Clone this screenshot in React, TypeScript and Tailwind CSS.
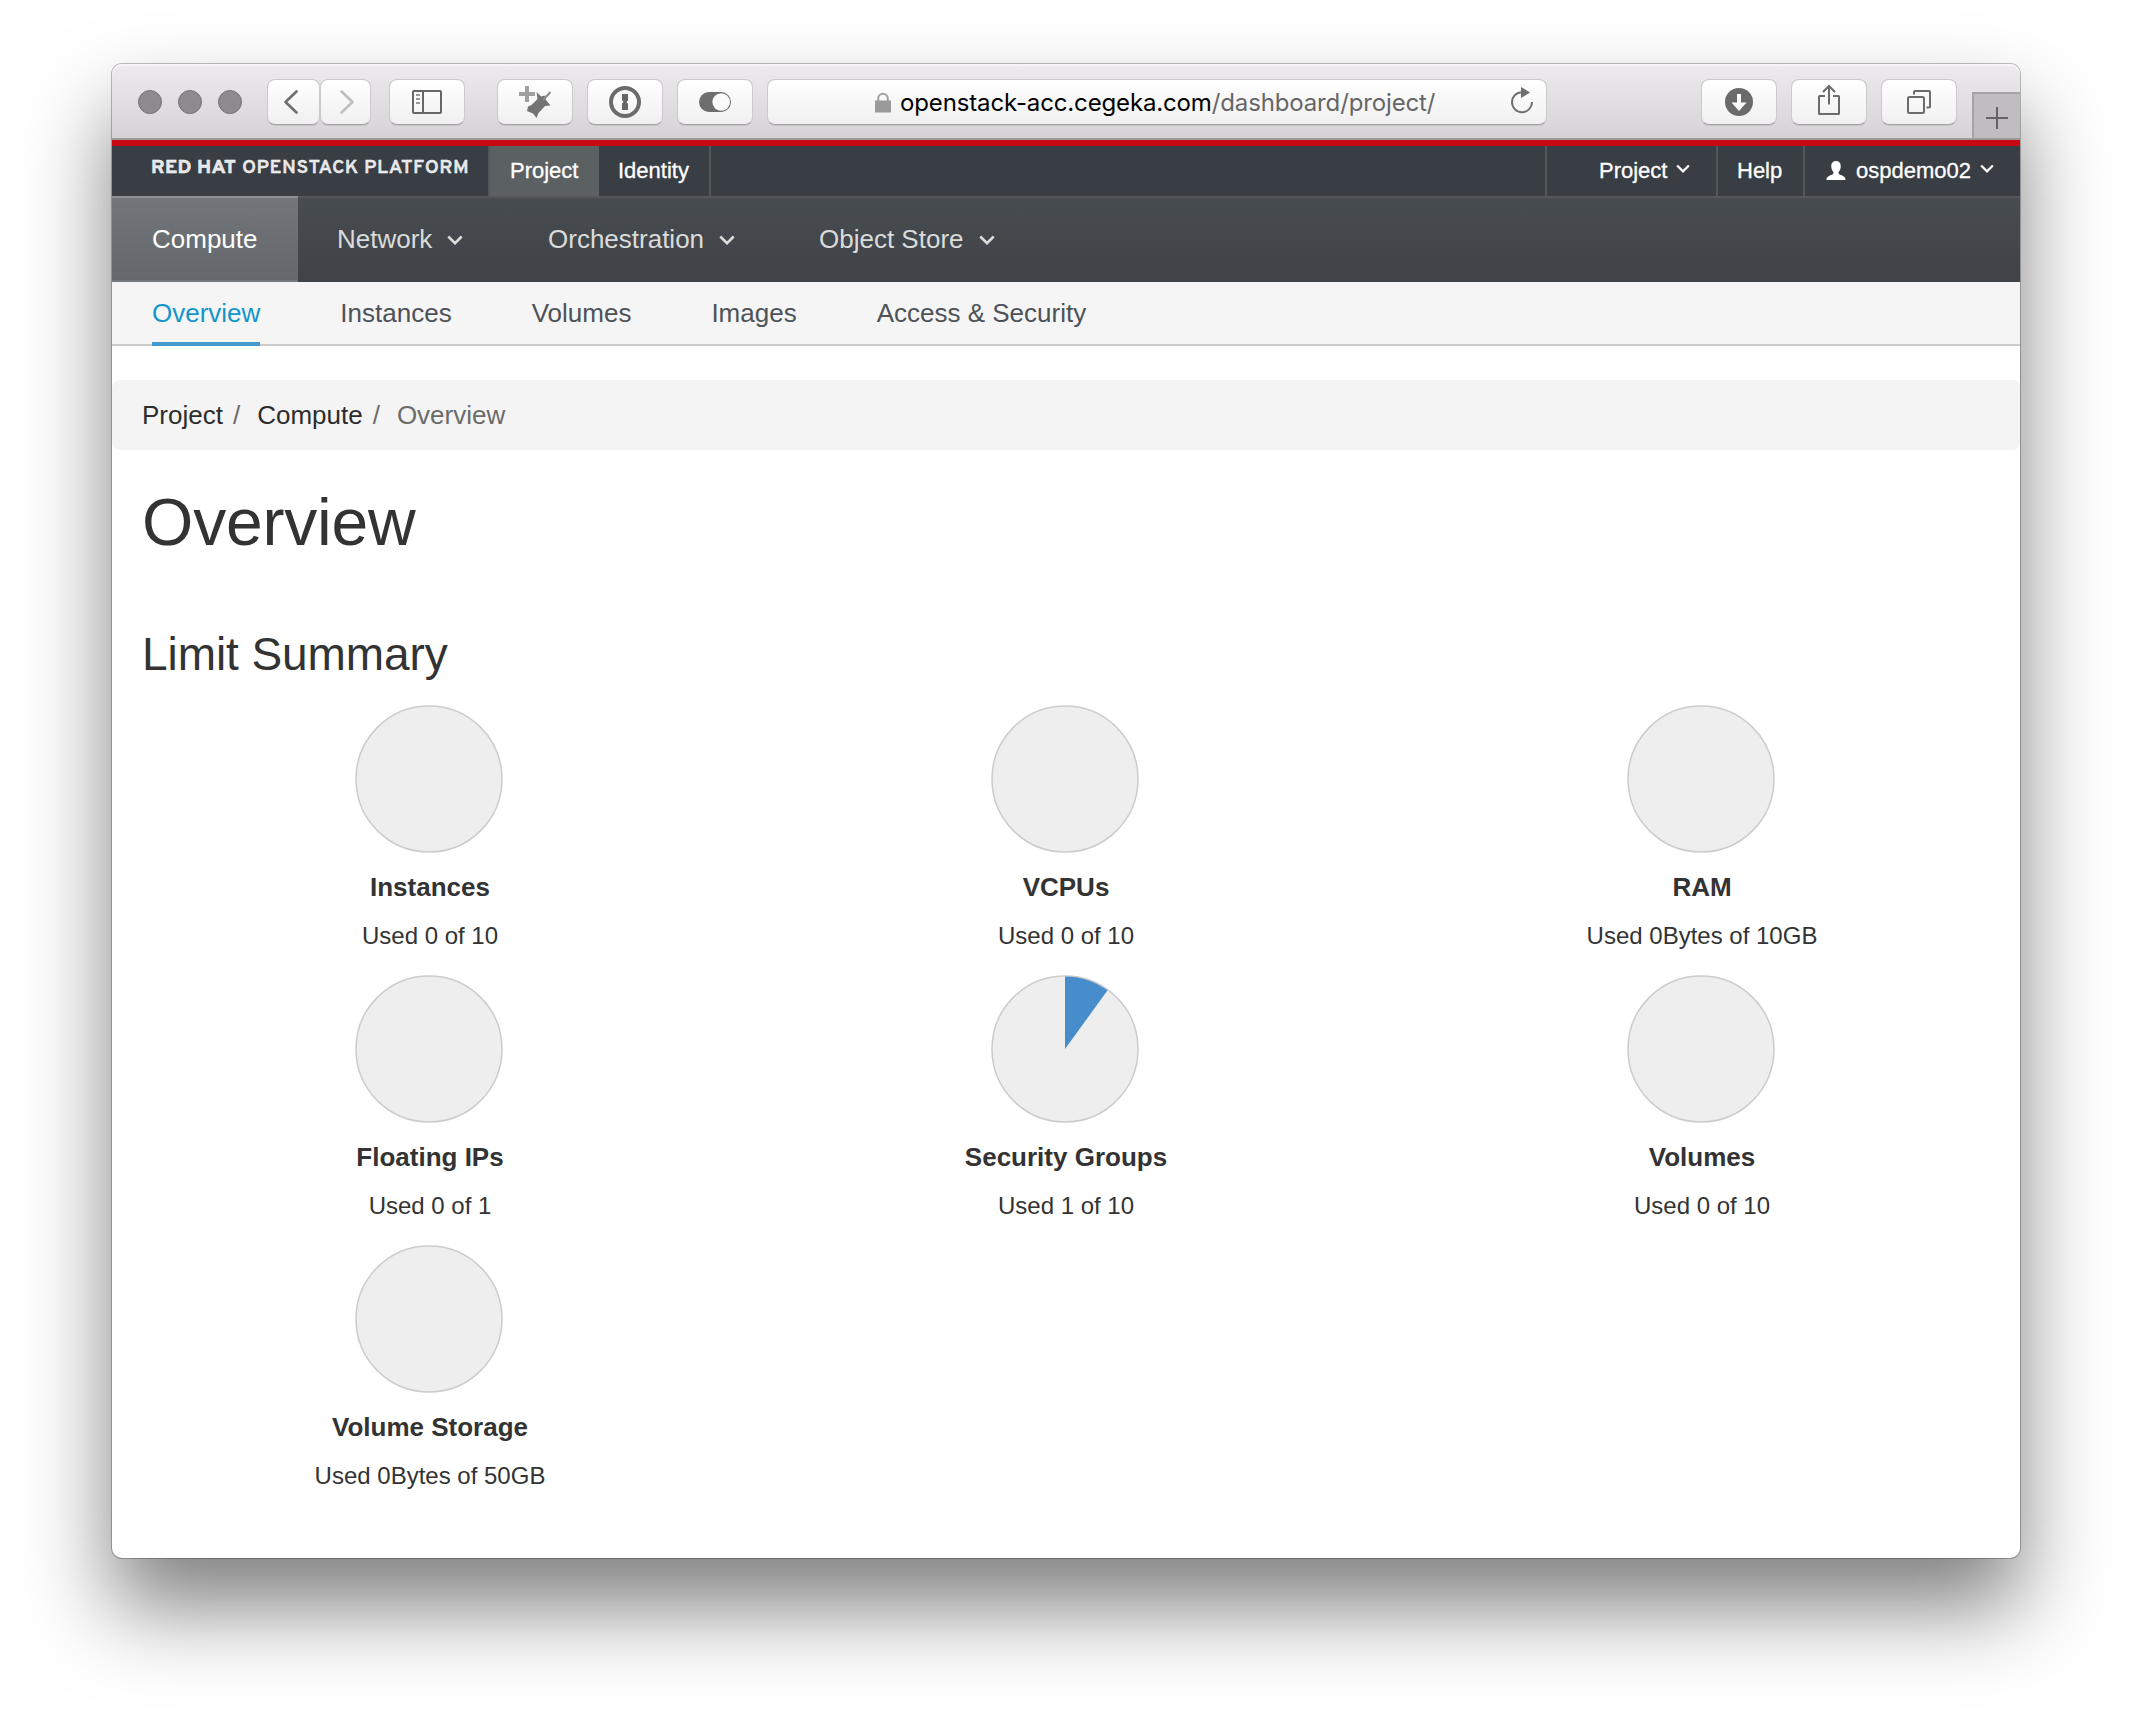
import React from "react";

type P = { className?: string };

const Chevron = ({ className = "" }: P) => (
  <svg viewBox="0 0 16 10" className={className} fill="none" stroke="currentColor" strokeWidth="2.6">
    <path d="M1.3 1.5 8 8.2l6.7-6.7" />
  </svg>
);

const Btn = ({ className = "", children }: P & { children?: React.ReactNode }) => (
  <div
    className={
      "flex h-[46px] shrink-0 items-center justify-center rounded-[8px] border border-[#cbc9cc] border-b-[#a3a1a4] bg-gradient-to-b from-white to-[#f1f0f1] text-[#6e6e6e] shadow-[0_1px_0_rgba(0,0,0,0.08)] " +
      className
    }
  >
    {children}
  </div>
);

const Toolbar = () => (
  <div className="flex h-[76px] rounded-t-[10px] border-b-2 border-[#9b999c] bg-gradient-to-b from-[#edebee] to-[#d5d3d6] shadow-[inset_0_2px_0_#f5f4f6]">
    <div className="flex flex-1 pt-[15px]">
      <div className="mt-[11px] ml-[26px] flex gap-4">
        {[0, 1, 2].map((i) => (
          <div key={i} className="size-6 rounded-full border border-[#747277] bg-[#8d8b90]" />
        ))}
      </div>
      <Btn className="ml-[25px] w-[53px]">
        <svg viewBox="0 0 16 24" className="mr-1.5 h-6 w-4" fill="none" stroke="#6e6e6e" strokeWidth="2.6" strokeLinecap="round" strokeLinejoin="round">
          <path d="M13.5 1.5 2.5 12l11 10.500" />
        </svg>
      </Btn>
      <Btn className="w-[51px]">
        <svg viewBox="0 0 16 24" className="ml-0.5 h-6 w-4" fill="none" stroke="#bfbfbf" strokeWidth="2.6" strokeLinecap="round" strokeLinejoin="round">
          <path d="M2.500 1.500 13.500 12l-11 10.500" />
        </svg>
      </Btn>
      <Btn className="ml-[18px] w-[76px]">
        <svg viewBox="0 0 30 24" className="h-6 w-[30px]" fill="none" stroke="#666" strokeWidth="2">
          <rect x="1" y="1" width="28" height="22" rx="1" />
          <path d="M11 1v22" />
          <path d="M4 5h4M4 9h4M4 13h4" stroke="#999" />
        </svg>
      </Btn>
      <Btn className="ml-8 w-[76px]">
        <svg viewBox="0 0 32 32" className="size-8">
          <path d="M8 0v16M0 8h16" stroke="#a0a0a0" strokeWidth="4" />
          <path d="M17.500 6 22 10.500l3.500-1 1.500 4.500 4.500 5.500-5.500.5-6.500 7-2 5-3.500-4.500L8 25l1-4.500 3.500-1.500 6-6z" fill="#737373" />
          <path d="M24 14 31.500 6" stroke="#8a8a8a" strokeWidth="2.200" />
        </svg>
      </Btn>
      <Btn className="ml-[14px] w-[76px]">
        <svg viewBox="0 0 32 32" className="size-8">
          <circle cx="16" cy="16" r="14" fill="none" stroke="#6b6b6b" strokeWidth="4" />
          <path d="M13 8h6v6.500l-1.500 1.500L19 18v6h-6v-6.500l1.500-1.500L13 14z" fill="#666" />
        </svg>
      </Btn>
      <Btn className="ml-[14px] w-[76px]">
        <svg viewBox="0 0 32 20" className="h-5 w-8">
          <rect x="0.600" y="0.600" width="30.800" height="18.800" rx="9.400" fill="#6e6e6e" stroke="#6e6e6e" strokeWidth="1.200" />
          <circle cx="22.200" cy="10" r="8.800" fill="#fafafa" />
        </svg>
      </Btn>
      <Btn className="ml-[14px] w-[780px]">
        <svg viewBox="0 0 16 21" className="mr-[9px] ml-[107px] h-[21px] w-4 shrink-0">
          <path d="M3.200 9V6.500a4.800 4.800 0 0 1 9.600 0V9" fill="none" stroke="#a0a0a0" strokeWidth="2" />
          <rect y="8.500" width="16" height="12" fill="#9a9a9a" />
        </svg>
        <div className="mt-[2px] w-[540px] font-['Inter','Liberation_Sans',sans-serif] text-[24px] leading-[42px] tracking-[-0.140px] whitespace-nowrap text-black">
          openstack-acc.cegeka.com<span className="text-[#666]">/dashboard/project/</span>
        </div>
        <svg viewBox="0 0 24 28" className="-mt-1 mr-3 ml-auto h-7 w-6 shrink-0">
          <path d="M12 6.200A10 10 0 1 0 22 16" fill="none" stroke="#6e6e6e" strokeWidth="2" />
          <path d="M11 1v11l9-5.500z" fill="#6e6e6e" />
        </svg>
      </Btn>
      <Btn className="ml-[154px] w-[76px]">
        <svg viewBox="0 0 28 28" className="size-7">
          <circle cx="14" cy="14" r="14" fill="#6b6b6b" />
          <path d="M12 6h4v8.500h5.500L14 23l-7.500-8.500H12z" fill="#fff" />
        </svg>
      </Btn>
      <Btn className="ml-[14px] w-[76px]">
        <svg viewBox="0 0 24 32" className="-mt-1 h-8 w-6" fill="none" stroke="#6b6b6b" strokeWidth="2">
          <path d="M8 12H2.500Q2 12 2 12.500v17q0 .5.500.5h19q.500 0 .500-.500v-17q0-.500-.500-.500H16" />
          <path d="M12 20.500V2.500M6 8l6-6 6 6" />
        </svg>
      </Btn>
      <Btn className="ml-[14px] w-[76px]">
        <svg viewBox="0 0 26 26" className="size-[26px]" fill="none" stroke="#6b6b6b" strokeWidth="2">
          <rect x="2" y="8" width="16" height="16" rx="1.500" />
          <path d="M8 5.500V3q0-1 1-1h14q1 0 1 1v14.500q0 1-1 1h-2.500" />
        </svg>
      </Btn>
    </div>
    <div className="mt-[28px] flex h-[46px] w-12 items-center justify-center border-t-2 border-l-2 border-[#a5a3a6] bg-[#bfbdc0]">
      <svg viewBox="0 0 22 22" className="mt-1 size-[22px]" stroke="#636363" strokeWidth="2">
        <path d="M11 0v22M0 11h22" />
      </svg>
    </div>
  </div>
);

const TopBar = () => (
  <div className="flex h-[52px] border-b-2 border-[#4b4f55] bg-[#393d44] text-[22px] leading-[50px] text-white [-webkit-text-stroke:0.300px_white]">
    <div className="flex w-[376px] pl-[39px] font-['Overpass','Open_Sans',sans-serif] text-[19.500px] leading-[44px] whitespace-nowrap text-[#e6e6e7]">
      <span className="w-[91px] font-extrabold tracking-[0.300px]">RED HAT</span>
      <span className="font-semibold tracking-[0.520px]">OPENSTACK PLATFORM</span>
    </div>
    <div className="w-[111px] border-l-2 border-[#53575c] bg-[#5b6063] pl-5">Project</div>
    <div className="w-[112px] border-r-2 border-[#53575c] pl-[19px]">Identity</div>
    <div className="flex-1" />
    <div className="flex w-[171px] border-l-2 border-[#53575c] pl-[52px]">
      Project
      <Chevron className="mt-[18px] ml-[9px] h-[9px] w-[14px]" />
    </div>
    <div className="w-[87px] border-l-2 border-[#53575c] pl-[19px]">Help</div>
    <div className="flex w-[217px] border-l-2 border-[#53575c] pl-[21px]">
      <svg viewBox="0 0 20 20" className="mt-[15px] mr-[10px] h-[19px] w-5" fill="#fff">
        <path d="M10 0c3.200 0 5 2.300 5 5.500 0 2.800-1.100 4.900-2.300 6.200-.4 1.800.3 2.300 2.300 3.100 2.700 1 5 1.900 5 5.200H0c0-3.300 2.300-4.200 5-5.200 2-.8 2.700-1.300 2.300-3.100C6.100 10.400 5 8.300 5 5.500 5 2.300 6.800 0 10 0z" />
      </svg>
      ospdemo02
      <Chevron className="mt-[18px] ml-[9px] h-[9px] w-[14px]" />
    </div>
  </div>
);

const MainNav = () => (
  <div className="-mt-[2px] flex h-[86px] text-[26px] leading-[82px] text-[#dbdbdb]">
    <div className="w-[186px] border-y-2 border-t-[#8d9095] border-b-[#74777b] bg-gradient-to-b from-[#72757a] to-[#64676b] pl-10 text-white">
      Compute
    </div>
    <div className="flex flex-1 border-t-2 border-[#53575c] bg-gradient-to-b from-[#474c50] to-[#3f4347]">
      {[
        ["Network", "w-[211px] pl-[39px]"],
        ["Orchestration", "w-[271px] pl-[39px]"],
        ["Object Store", "pl-[39px]"],
      ].map(([t, c]) => (
        <div key={t} className={"flex h-[82px] items-center " + c}>
          {t}
          <Chevron className="mt-px ml-[15px] h-[10px] w-4" />
        </div>
      ))}
    </div>
  </div>
);

const SubNav = () => (
  <div className="flex h-16 gap-20 border-b-2 border-[#ccc] bg-[#f5f5f5] pl-10 text-[26px] leading-[63px] text-[#4d5258]">
    <div className="h-16 border-b-4 border-[#429ad1] text-[#1496cb]">Overview</div>
    <div>Instances</div>
    <div>Volumes</div>
    <div>Images</div>
    <div>Access &amp; Security</div>
  </div>
);

const charts: [string, string, boolean][] = [
  ["Instances", "Used 0 of 10", false],
  ["VCPUs", "Used 0 of 10", false],
  ["RAM", "Used 0Bytes of 10GB", false],
  ["Floating IPs", "Used 0 of 1", false],
  ["Security Groups", "Used 1 of 10", true],
  ["Volumes", "Used 0 of 10", false],
  ["Volume Storage", "Used 0Bytes of 50GB", false],
];

export default function App() {
  return (
    <div className="flex h-[1718px] w-[2132px] justify-center overflow-hidden bg-white pt-16 font-['Liberation_Sans',Arial,sans-serif]">
      <div className="h-[1494px] w-[1908px] rounded-[10px] bg-white text-[#333] shadow-[0_0_0_1px_rgba(0,0,0,0.25),0_49px_86px_rgba(0,0,0,0.5)]">
        <Toolbar />
        <div className="h-1.5 bg-[#c90813]" />
        <TopBar />
        <MainNav />
        <SubNav />
        <div className="mt-[34px] flex h-[70px] rounded-[8px] bg-[#f4f4f4] pl-[30px] text-[26px] leading-[70px] whitespace-pre text-[#6b6b6b]">
          <span className="text-[#2d2d2d]">Project</span>
          <span className="mr-[17px] ml-[10px]">/</span>
          <span className="text-[#2d2d2d]">Compute</span>
          <span className="mr-[17px] ml-[10px]">/</span>
          <span>Overview</span>
        </div>
        <h1 className="mt-8 pl-[30px] text-[66px] leading-[80px] tracking-[-0.200px]">Overview</h1>
        <h2 className="mt-[62px] pl-[30px] text-[46px] leading-[60px] tracking-[-0.080px]">Limit Summary</h2>
        <div className="mt-[20px] grid grid-cols-3">
          {charts.map(([t, u, pie]) => (
            <div key={t} className="flex h-[270px] flex-col items-center">
              <svg viewBox="0 0 150 150" className="mr-0.5 size-[150px]">
                <circle cx="75" cy="75" r="73" fill="#eee" stroke="#ccc" strokeWidth="1.500" />
                {pie && <path d="M75 75V2.500A72.500 72.500 0 0 1 117.610 16.350z" fill="#478dcb" />}
              </svg>
              <div className="mt-[18px] text-[26px] leading-[30px] font-bold">{t}</div>
              <div className="mt-5 text-[24px] leading-[28px]">{u}</div>
            </div>
          ))}
        </div>
      </div>
    </div>
  );
}
